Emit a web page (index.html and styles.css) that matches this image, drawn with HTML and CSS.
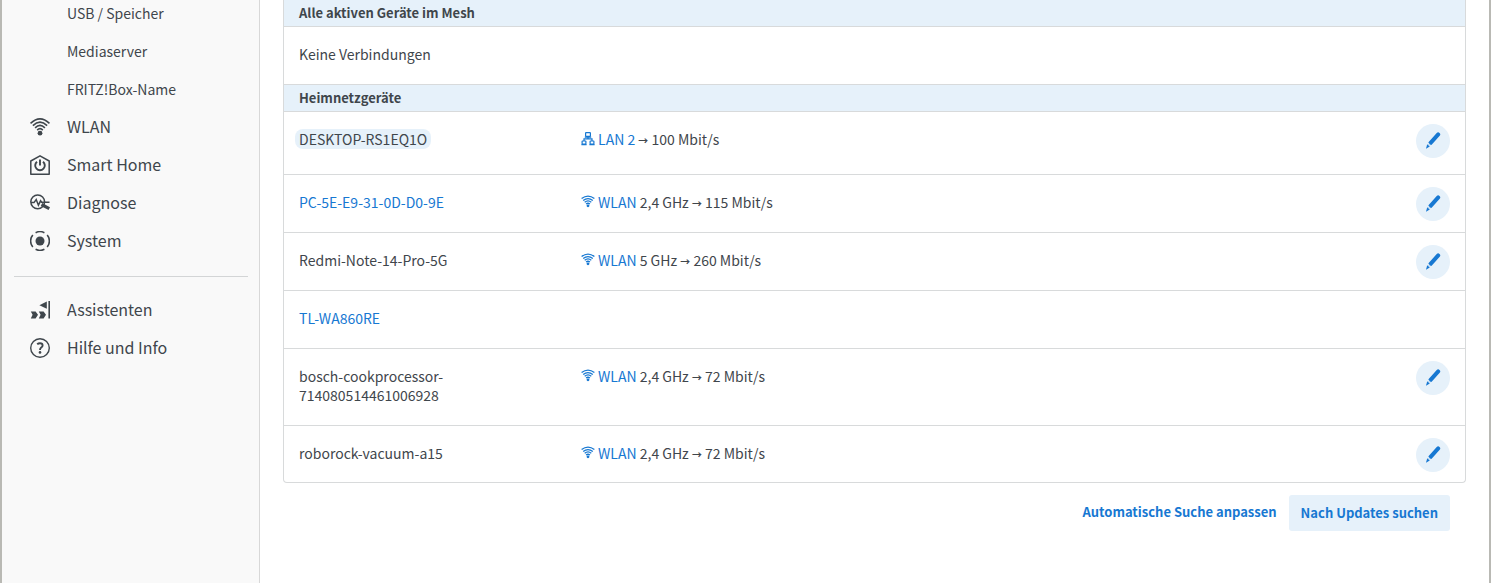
FILE: index.html
```html
<!DOCTYPE html>
<html lang="de">
  <head>
    <meta charset="utf-8">
    <title>FRITZ!Box - Heimnetz</title>
    <link rel="stylesheet" href="styles.css">
  </head>
  <body>
    <svg class="defs" width="0" height="0" aria-hidden="true">
      <symbol id="wifi" viewBox="0 0 20 20">
        <g fill="none" stroke="currentColor" stroke-width="1.6">
          <path d="M0.5 6.3Q10 -2.7 19.5 6.3"/>
          <path d="M2.9 8.6Q10 1.7 17.1 8.6"/>
          <path d="M5.1 10.9Q10 6 14.9 10.9"/>
          <path d="M7.2 13.1Q10 10.2 12.8 13.1"/>
        </g>
        <circle cx="10" cy="16.2" r="2.4" fill="currentColor"/>
      </symbol>
      <symbol id="wifi-small" viewBox="0 0 14 14">
        <g fill="none" stroke="currentColor" stroke-width="1.3">
          <path d="M0.6 4.6Q7 -0.4 13.4 4.6"/>
          <path d="M2.2 6.5Q7 2.6 11.8 6.5"/>
          <path d="M3.7 8.3Q7 5.6 10.3 8.3"/>
          <path d="M5.1 10Q7 8.5 8.9 10"/>
        </g>
        <circle cx="7" cy="11.8" r="1.4" fill="currentColor"/>
      </symbol>
      <symbol id="lan" viewBox="0 0 14 14">
        <g fill="none" stroke="currentColor" stroke-width="1.2">
          <rect x="4.6" y="0.6" width="4.8" height="3.8" rx="0.5"/>
          <rect x="1.1" y="9" width="3.8" height="3" rx="0.5"/>
          <rect x="9.1" y="9" width="3.8" height="3" rx="0.5"/>
          <path d="M7 4.4V6.8M3 9V6.8H11V9M0.4 12.6H5.6M8.4 12.6H13.6M3.8 5.2H10.2"/>
        </g>
      </symbol>
      <symbol id="pen" viewBox="0 0 16 18">
        <path d="M13.2 2.4L5.4 11.2" stroke="currentColor" stroke-width="4" stroke-linecap="round"/>
        <path d="M2.2 12.2L4.8 14.5L1 16.8Z" fill="currentColor"/>
        <path d="M2.6 10.6L6.2 13.8" stroke="#e6f1fa" stroke-width="1"/>
      </symbol>
    </svg>

    <div class="page">
      <nav class="sidebar">
        <ul class="menu">
          <li><a class="sub" href="#">USB / Speicher</a></li>
          <li><a class="sub" href="#">Mediaserver</a></li>
          <li><a class="sub" href="#">FRITZ!Box-Name</a></li>
          <li><a href="#"><svg class="icon"><use href="#wifi"/></svg>WLAN</a></li>
          <li><a href="#"><svg class="icon" viewBox="0 0 20 20" fill="none" stroke="currentColor" stroke-width="1.5">
            <path d="M0.8 6L10 0.8L19.2 6V19.2H0.8Z" stroke-linejoin="round"/>
            <path d="M7 6.7A4.8 4.8 0 1 0 13 6.7M10 4.6V10.6" stroke-width="1.9"/>
          </svg>Smart Home</a></li>
          <li><a href="#"><svg class="icon" viewBox="0 0 20 20" fill="none" stroke="currentColor" stroke-width="1.5">
            <circle cx="7.7" cy="8.8" r="6.9"/>
            <path d="M1 9.6H4L6.2 6.6L8.4 12.2L10.6 7.8L11.6 9.2H19.5"/>
            <path d="M11.5 11.5L19.3 15.6" stroke-width="3.2"/>
          </svg>Diagnose</a></li>
          <li><a href="#"><svg class="icon" viewBox="0 0 20 20" fill="none" stroke="currentColor" stroke-width="1.6">
            <circle cx="10" cy="10" r="4.5" fill="currentColor" stroke="none"/>
            <path d="M5.6 1.7A9.4 9.4 0 0 1 14.4 1.7M5.6 18.3A9.4 9.4 0 0 0 14.4 18.3M2.8 4A9.3 9.3 0 0 0 2.8 16M17.2 4A9.3 9.3 0 0 1 17.2 16"/>
          </svg>System</a></li>
        </ul>
        <hr>
        <ul class="menu-bottom">
          <li><a href="#"><svg class="icon" viewBox="0 0 20 20" fill="currentColor">
            <path d="M18.4 1H20.4V18.6H18.4Z"/>
            <path d="M9.4 5.2L16.8 1.6V8.8Z"/>
            <path d="M0.8 11.4H5.6L8 14.8L5.6 18.4H0.8L2.6 14.8Z"/>
            <path d="M8.8 11.4H13.6L16 14.8L13.6 18.4H8.8L10.6 14.8Z"/>
          </svg>Assistenten</a></li>
          <li><a href="#"><svg class="icon" viewBox="0 0 20 20" fill="none" stroke="currentColor">
            <circle cx="10" cy="10" r="9.3" stroke-width="1.4"/>
            <path d="M7.2 6.3Q8.4 5.2 10 5.2Q12.6 5.2 12.6 7.4Q12.6 8.6 11.2 9.6Q10 10.5 10 12" stroke-width="1.9"/>
            <circle cx="10" cy="14.4" r="1.3" fill="currentColor" stroke="none"/>
          </svg>Hilfe und Info</a></li>
        </ul>
      </nav>

      <main>
        <table>
          <tbody>
            <tr><th colspan="3">Alle aktiven Geräte im Mesh</th></tr>
            <tr><td colspan="3">Keine Verbindungen</td></tr>
            <tr><th colspan="3">Heimnetzgeräte</th></tr>
            <tr class="own">
              <td class="name"><span class="current">DESKTOP-RS1EQ1O</span></td>
              <td><a href="#"><svg class="conn lan"><use href="#lan"/></svg>LAN 2</a> <span class="arrow">→</span> 100 Mbit/s</td>
              <td class="action"><button class="edit" aria-label="Bearbeiten"><svg><use href="#pen"/></svg></button></td>
            </tr>
            <tr>
              <td class="name"><a href="#">PC-5E-E9-31-0D-D0-9E</a></td>
              <td><a href="#"><svg class="conn"><use href="#wifi-small"/></svg>WLAN</a> 2,4 GHz <span class="arrow">→</span> 115 Mbit/s</td>
              <td class="action"><button class="edit" aria-label="Bearbeiten"><svg><use href="#pen"/></svg></button></td>
            </tr>
            <tr>
              <td class="name">Redmi-Note-14-Pro-5G</td>
              <td><a href="#"><svg class="conn"><use href="#wifi-small"/></svg>WLAN</a> 5 GHz <span class="arrow">→</span> 260 Mbit/s</td>
              <td class="action"><button class="edit" aria-label="Bearbeiten"><svg><use href="#pen"/></svg></button></td>
            </tr>
            <tr>
              <td class="name"><a href="#">TL-WA860RE</a></td>
              <td></td>
              <td class="action"></td>
            </tr>
            <tr>
              <td class="name">bosch-cookprocessor-<br>714080514461006928</td>
              <td><a href="#"><svg class="conn"><use href="#wifi-small"/></svg>WLAN</a> 2,4 GHz <span class="arrow">→</span> 72 Mbit/s</td>
              <td class="action"><button class="edit" aria-label="Bearbeiten"><svg><use href="#pen"/></svg></button></td>
            </tr>
            <tr>
              <td class="name">roborock-vacuum-a15</td>
              <td><a href="#"><svg class="conn"><use href="#wifi-small"/></svg>WLAN</a> 2,4 GHz <span class="arrow">→</span> 72 Mbit/s</td>
              <td class="action"><button class="edit" aria-label="Bearbeiten"><svg><use href="#pen"/></svg></button></td>
            </tr>
          </tbody>
        </table>
        <div class="buttons">
          <button class="plain">Automatische Suche anpassen</button>
          <button class="update">Nach Updates suchen</button>
        </div>
      </main>
    </div>
  </body>
</html>
```
FILE: styles.css
```css
* {
  box-sizing: border-box;
}

body {
  margin: 0;
  background-color: #fff;
  color: #3f464c;
  font-family: "Noto Sans CJK SC", "Open Sans", sans-serif;
  font-size: 14px;
  line-height: 19px;
}

a {
  color: #1778d2;
  text-decoration: none;
}

button {
  border: none;
  font: inherit;
  cursor: pointer;
}

.defs {
  position: absolute;
}

.page {
  display: flex;
  min-height: 100vh;
  border-left: 2px solid #b9b9b4;
  border-right: 2px solid #b9b9b4;
}

/* navigation */
.sidebar {
  width: 258px;
  flex-shrink: 0;
  overflow: hidden;
  background-color: #f9f9f9;
  border-right: 1px solid #d8d8d8;
}

.sidebar ul {
  margin: 0;
  padding: 0;
  list-style: none;
}

.sidebar .menu {
  margin-top: -6px;
}

.sidebar a {
  display: flex;
  align-items: center;
  gap: 17px;
  height: 38px;
  padding: 0 0 2px 28px;
  color: #3f464c;
  font-size: 16px;
}

.sidebar a.sub {
  padding: 0 0 0 65px;
  font-size: 14px;
}

.icon {
  width: 20px;
  height: 20px;
  margin-top: 2px;
}

.sidebar hr {
  margin: 16px 11px 14px 12px;
  border: none;
  border-top: 1px solid #d3d5d6;
}

/* device list */
main {
  flex: 1;
  padding: 0 23px;
}

table {
  width: 100%;
  border: 1px solid #d8dadb;
  border-top: none;
  border-radius: 0 0 4px 4px;
  border-spacing: 0;
}

th,
td {
  padding: 18px 15px 20px;
  border-bottom: 1px solid #d8dadb;
  text-align: left;
  vertical-align: top;
}

th {
  padding: 3px 15px 4px;
  background-color: #e6f1fa;
  font-size: 13px;
  font-weight: bold;
}

tr:last-child td {
  padding-bottom: 19px;
  border-bottom: none;
}

.own td {
  padding-bottom: 25px;
}

.name {
  width: 282px;
}

td.action,
tr:last-child td.action {
  width: 80px;
  padding: 12px 15px 0;
}

.current {
  margin-left: -4px;
  padding: 0 4px;
  border-radius: 8px;
  background-color: #e6f1fa;
}

.arrow {
  font-size: 10px;
  font-weight: bold;
  line-height: 10px;
}

.conn {
  width: 14px;
  height: 14px;
  margin-right: 3px;
}

.lan {
  vertical-align: -1px;
}

.edit {
  display: flex;
  align-items: center;
  justify-content: center;
  width: 34px;
  height: 34px;
  margin-left: auto;
  padding: 0;
  border-radius: 50%;
  background-color: #e6f1fa;
  color: #1778d2;
}

.edit svg {
  width: 16px;
  height: 18px;
}

.buttons {
  display: flex;
  justify-content: flex-end;
  align-items: center;
  gap: 12px;
  padding: 12px 16px;
}

.buttons button {
  height: 36px;
  padding: 0 12px 2px;
  border-radius: 3px;
  background-color: #e6f1fa;
  color: #1778d2;
  font-size: 13px;
  font-weight: bold;
}

.buttons .plain {
  padding: 0 0 4px;
  background: none;
}
```
